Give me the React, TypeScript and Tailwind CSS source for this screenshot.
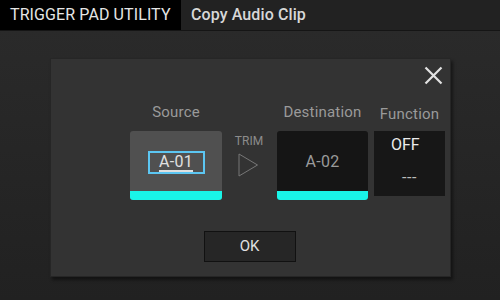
import React from "react";

const CYAN = "bg-[#19f5e8]";

export default function App() {
  return (
    <div
      className="w-[500px] h-[300px] overflow-hidden bg-gradient-to-b from-[#2b2b2b] to-[#212121] text-[#dddddd]"
      style={{ fontFamily: "Roboto, 'Liberation Sans', sans-serif" }}
    >
      {/* Header */}
      <div className="flex h-[31px] bg-[#222222] border-b border-[#151515]">
        <div className="flex items-center bg-black pl-[10px] w-[181px] text-[16px] tracking-[0.1px] text-[#e6e6e6]">
          TRIGGER PAD UTILITY
        </div>
        <div className="flex items-center pl-[10px] text-[16px] font-medium text-[#d8d8d8] tracking-[0.1px]">
          Copy Audio Clip
        </div>
      </div>

      {/* Dialog */}
      <div className="ml-[50px] mt-[27px] w-[401px] h-[219px] bg-[#333333] border border-[#262626] shadow-[2px_3px_3px_rgba(0,0,0,0.45)] flex flex-col">
        <div className="flex justify-end pr-[7px] pt-[7px]">
          <svg width="19" height="19" viewBox="0 0 19 19">
            <path d="M1.5 1.5 L17.5 17.5 M17.5 1.5 L1.5 17.5" stroke="#e2e2e2" strokeWidth="2.2" />
          </svg>
        </div>

        {/* Labels */}
        <div className="flex pl-[79px] mt-[17px] h-[20px] text-[15px] text-[#9a9a9a] tracking-[0.2px]">
          <div className="w-[92px] text-center leading-[20px]">Source</div>
          <div className="w-[55px]" />
          <div className="w-[91px] text-center leading-[20px]">Destination</div>
          <div className="w-[6px]" />
          <div className="w-[71px] text-center leading-[20px] pt-[2px] whitespace-nowrap">Function</div>
        </div>

        {/* Boxes */}
        <div className="flex pl-[79px] mt-[9px] h-[69px]">
          <div className="w-[92px] h-[69px] rounded-[3px] overflow-hidden bg-[#505050] flex flex-col">
            <div className="flex-1 flex items-center justify-center pt-[2px]">
              <div className="w-[57px] h-[23px] border-2 border-[#5cc6f2] flex items-center justify-center">
                <span className="text-[16px] leading-[16px] text-[#e0e0e0] underline decoration-[1.5px] underline-offset-[3px] tracking-[0.3px]">
                  A-01
                </span>
              </div>
            </div>
            <div className={`h-[9px] ${CYAN}`} />
          </div>

          <div className="w-[55px] flex flex-col items-center">
            <div className="mt-[4px] text-[12px] leading-[12px] text-[#8c8c8c] pr-[1px]">TRIM</div>
            <svg className="mt-[6px] mr-[2px]" width="21" height="24" viewBox="0 0 21 24">
              <path d="M1 1 L19.5 12 L1 23 Z" fill="none" stroke="#777777" strokeWidth="1" />
            </svg>
          </div>

          <div className="w-[91px] h-[69px] rounded-[3px] overflow-hidden bg-[#151515] flex flex-col">
            <div className="flex-1 flex items-center justify-center pt-[2px] text-[16px] text-[#9a9a9a] tracking-[0.3px]">A-02</div>
            <div className={`h-[9px] ${CYAN}`} />
          </div>

          <div className="w-[6px]" />

          <div className="w-[71px] h-[65px] bg-[#171717] flex flex-col">
            <div className="mt-[6px] pl-[17px] text-[16px] leading-[16px] text-[#ececec]">OFF</div>
            <div className="mt-[18px] text-center text-[16px] leading-[14px] text-[#bbbbbb] tracking-[0.5px]">---</div>
          </div>
        </div>

        {/* OK */}
        <div className="flex justify-center mt-[31px] pr-[2px]">
          <div className="w-[92px] h-[31px] bg-[#262626] border border-[#111111] flex items-center justify-center text-[15px] text-[#e0e0e0]">
            OK
          </div>
        </div>
      </div>
    </div>
  );
}
